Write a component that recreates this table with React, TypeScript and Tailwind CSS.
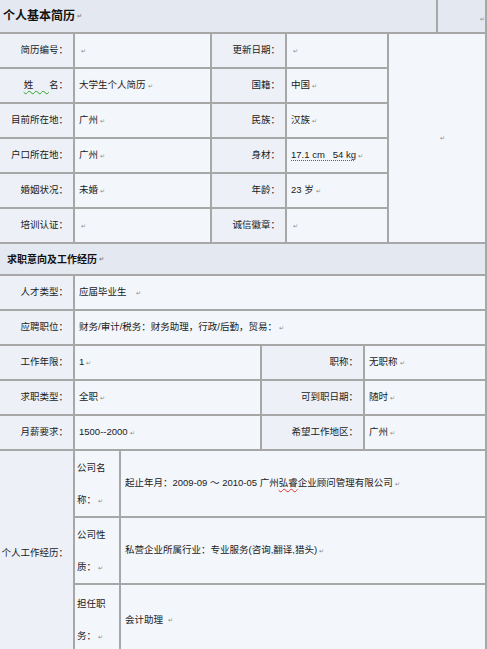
import React from "react";

const Mark = () => (
  <span className="ml-[2px] text-[6px] leading-none text-[#8a8a8a]">↵</span>
);

const FONT = { fontFamily: '"Liberation Sans", "Noto Sans CJK SC", sans-serif' };

function L({ children, className = "" }: { children?: React.ReactNode; className?: string }) {
  return (
    <div className={`flex items-center justify-end bg-[#edf1f7] pr-[5px] text-[9.5px] text-[#1a1a1a] whitespace-pre ${className}`}>
      {children}
    </div>
  );
}

function V({ children, className = "" }: { children?: React.ReactNode; className?: string }) {
  return (
    <div className={`flex items-center bg-[#f3f6fa] pl-[4px] text-[9.5px] text-[#1a1a1a] whitespace-pre ${className}`}>
      {children}
    </div>
  );
}

export default function App() {
  return (
    <div className="h-[649px] w-[487px] overflow-hidden bg-white" style={FONT}>
      <div className="flex w-[487px] flex-col gap-[2px] bg-[#a7a7a7] pr-[2px]">
        {/* header */}
        <div className="grid h-[32px] grid-cols-[436px_1fr] gap-[2px]">
          <div className="flex items-center bg-[#e3e8f1] pl-[3px] text-[12px] font-bold text-[#111]">
            个人基本简历<Mark />
          </div>
          <div className="flex items-center justify-end bg-[#e3e8f1] pt-[6px] text-[9px]">
            <Mark />
          </div>
        </div>

        {/* basic info */}
        <div className="grid grid-cols-[73px_135px_73px_100px_96px] grid-rows-[repeat(6,33px)] gap-[2px]">
          <L>简历编号：</L>
          <V><Mark /></V>
          <L>更新日期：</L>
          <V><Mark /></V>
          <div className="row-span-6 flex items-center justify-center bg-[#f3f6fa] pl-[8px]">
            <Mark />
          </div>

          <L>
            <span className="underline decoration-wavy decoration-[#2fa52f] decoration-1 underline-offset-2">姓      </span>名：
          </L>
          <V>大学生个人简历<Mark /></V>
          <L>国籍：</L>
          <V>中国<Mark /></V>

          <L>目前所在地：</L>
          <V>广州<Mark /></V>
          <L>民族：</L>
          <V>汉族<Mark /></V>

          <L>户口所在地：</L>
          <V>广州<Mark /></V>
          <L>身材：</L>
          <V>
            <span className="underline decoration-dotted decoration-[#b0309a] underline-offset-2">17.1 cm   54 kg</span>
            <Mark />
          </V>

          <L>婚姻状况：</L>
          <V>未婚<Mark /></V>
          <L>年龄：</L>
          <V>23 岁<Mark /></V>

          <L>培训认证：</L>
          <V><Mark /></V>
          <L>诚信徽章：</L>
          <V><Mark /></V>
        </div>

        {/* section header */}
        <div className="flex h-[30px] items-center bg-[#e3e8f1] pl-[7px] text-[10px] font-bold text-[#111]">
          求职意向及工作经历<Mark />
        </div>

        <div className="grid grid-cols-[73px_1fr] grid-rows-[repeat(2,33px)] gap-[2px]">
          <L>人才类型：</L>
          <V>应届毕业生   <Mark /></V>
          <L>应聘职位：</L>
          <V>财务/审计/税务：财务助理，行政/后勤，贸易：<Mark /></V>
        </div>

        <div className="grid grid-cols-[73px_185px_101px_1fr] grid-rows-[repeat(3,33px)] gap-[2px]">
          <L>工作年限：</L>
          <V>1<Mark /></V>
          <L>职称：</L>
          <V>无职称<Mark /></V>

          <L>求职类型：</L>
          <V>全职<Mark /></V>
          <L>可到职日期：</L>
          <V>随时<Mark /></V>

          <L>月薪要求：</L>
          <V>1500--2000<Mark /></V>
          <L>希望工作地区：</L>
          <V>广州<Mark /></V>
        </div>

        {/* work experience */}
        <div className="grid grid-cols-[73px_44px_1fr] grid-rows-[65px_65px_70px] gap-[2px]">
          <L className="row-span-3">个人工作经历：</L>

          <div className="flex flex-col justify-center bg-[#f3f6fa] pl-[2px] text-[9.5px] leading-[32px] text-[#1a1a1a]">
            <div>公司名</div>
            <div>称：<Mark /></div>
          </div>
          <V className="pl-[3px]">起止年月：2009-09 ～ 2010-05 广州<span className="underline decoration-wavy decoration-[#e03030] decoration-1 underline-offset-2">弘睿</span>企业顾问管理有限公司<Mark /></V>

          <div className="flex flex-col justify-center bg-[#f3f6fa] pl-[2px] text-[9.5px] leading-[32px] text-[#1a1a1a]">
            <div>公司性</div>
            <div>质：<Mark /></div>
          </div>
          <V className="pl-[3px]">私营企业所属行业：专业服务(咨询,翻译,猎头)<Mark /></V>

          <div className="flex flex-col justify-center bg-[#f3f6fa] pl-[2px] text-[9.5px] leading-[32px] text-[#1a1a1a]">
            <div>担任职</div>
            <div>务：<Mark /></div>
          </div>
          <V className="pl-[3px]">会计助理 <Mark /></V>
        </div>
      </div>
    </div>
  );
}
